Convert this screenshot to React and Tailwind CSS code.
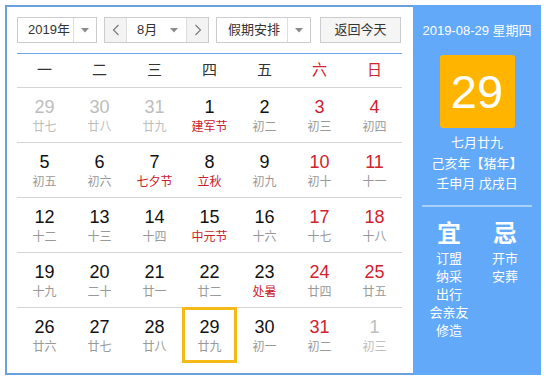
import React from "react";

const F = { fontFamily: '"Liberation Sans", "Noto Sans CJK SC", sans-serif' };

const rows = [
  [["29","廿七","o"],["30","廿八","o"],["31","廿九","o"],["1","建军节","f"],["2","初二",""],["3","初三","w"],["4","初四","w"]],
  [["5","初五",""],["6","初六",""],["7","七夕节","f"],["8","立秋","f"],["9","初九",""],["10","初十","w"],["11","十一","w"]],
  [["12","十二",""],["13","十三",""],["14","十四",""],["15","中元节","f"],["16","十六",""],["17","十七","w"],["18","十八","w"]],
  [["19","十九",""],["20","二十",""],["21","廿一",""],["22","廿二",""],["23","处暑","f"],["24","廿四","w"],["25","廿五","w"]],
  [["26","廿六",""],["27","廿七",""],["28","廿八",""],["29","廿九","t"],["30","初一",""],["31","初二","w"],["1","初三","o"]],
];

const Tri = () => (
  <svg width="8" height="5" viewBox="0 0 8 5"><path d="M0 0 L8 0 L4 4.5 Z" fill="#8a8a8a" /></svg>
);

const Chev = ({ dir }) => (
  <svg width="8" height="12" viewBox="0 0 8 12">
    <path d={dir === "l" ? "M6.5 1 L1.5 6 L6.5 11" : "M1.5 1 L6.5 6 L1.5 11"} fill="none" stroke="#777" strokeWidth="1.1" />
  </svg>
);

function Cell({ d }) {
  const [n, l, k] = d;
  const today = k === "t";
  let numC = "text-[#111]";
  let lunC = "text-[#999]";
  if (k === "o") { numC = "text-[#bdbdbd]"; lunC = "text-[#bdbdbd]"; }
  if (k === "w") numC = "text-[#d0222f]";
  if (k === "f") lunC = "text-[#c9202c]";
  return (
    <div className={`flex flex-col items-center ${today ? "border-[3px] border-[#f6b917] -mt-px pt-[6px]" : "pt-[8px]"}`}>
      <div className={`text-[18px] leading-[22px] ${numC}`}>{n}</div>
      <div className={`text-[12px] leading-[18px] ${lunC}`}>{l}</div>
    </div>
  );
}

export default function App() {
  const weekdays = ["一","二","三","四","五","六","日"];
  return (
    <div className="w-[547px] h-[381px] bg-white pt-[5px] pl-[5px]" style={F}>
      <div className="flex h-[370px]">
        <div className="w-[408px] border-2 border-r-0 border-[#6c9fe0] pl-[10px] pt-[10px]">
          <div className="flex h-[26px] text-[13px] text-[#333]">
            <div className="flex w-[80px] border border-[#ccc]">
              <div className="w-[55px] pl-[10px] leading-[24px]">2019年</div>
              <div className="flex-1 border-l border-[#ddd] flex items-center justify-center"><Tri /></div>
            </div>
            <div className="flex w-[105px] ml-[7px] border border-[#ccc]">
              <div className="w-[22px] bg-[#f3f3f3] border-r border-[#ddd] flex items-center justify-center"><Chev dir="l" /></div>
              <div className="flex-1 flex items-center pl-[10px] pr-[8px] justify-between">
                <span className="leading-[24px]">8月</span><Tri />
              </div>
              <div className="w-[22px] bg-[#f3f3f3] border-l border-[#ddd] flex items-center justify-center"><Chev dir="r" /></div>
            </div>
            <div className="flex w-[95px] ml-[7px] border border-[#ccc]">
              <div className="w-[70px] pl-[11px] leading-[24px]">假期安排</div>
              <div className="flex-1 border-l border-[#ddd] flex items-center justify-center"><Tri /></div>
            </div>
            <div className="w-[81px] ml-[9px] border border-[#ccc] bg-[#f5f5f5] flex items-center justify-center leading-[24px]">返回今天</div>
          </div>
          <div className="w-[385px] mt-[10px] h-px bg-[#6aa8ee]" />
          <div className="w-[385px] grid grid-cols-7 h-[34px] border-b border-[#d5d5d5] items-center text-[15px]">
            {weekdays.map((w, i) => (
              <div key={i} className={`text-center ${i >= 5 ? "text-[#d0222f]" : "text-[#333]"}`}>{w}</div>
            ))}
          </div>
          {rows.map((r, i) => (
            <div key={i} className={`w-[385px] grid grid-cols-7 h-[55px] ${i < 4 ? "border-b border-[#d5d5d5]" : ""}`}>
              {r.map((d, j) => <Cell key={j} d={d} />)}
            </div>
          ))}
        </div>
        <div className="w-[128px] bg-[#62a9f9] flex flex-col items-center text-white">
          <div className="mt-[17px] text-[13px] leading-[18px]">2019-08-29 星期四</div>
          <div className="mt-[15px] w-[75px] h-[73px] bg-[#ffb500] rounded-[3px] flex items-center justify-center text-[47px] leading-none">29</div>
          <div className="mt-[5px] text-[13px] leading-[20.5px] text-center">
            <div>七月廿九</div>
            <div>己亥年【猪年】</div>
            <div>壬申月 戊戌日</div>
          </div>
          <div className="mt-[10px] w-[110px] h-[2px] bg-[#a9d0fb]" />
          <div className="flex w-[112px] mt-[12px]">
            <div className="w-[56px] flex flex-col items-center">
              <div className="text-[24px] leading-[30px] font-bold">宜</div>
              <div className="text-[13px] leading-[18px] text-center mt-px">
                <div>订盟</div><div>纳采</div><div>出行</div><div>会亲友</div><div>修造</div>
              </div>
            </div>
            <div className="w-[56px] flex flex-col items-center">
              <div className="text-[24px] leading-[30px] font-bold">忌</div>
              <div className="text-[13px] leading-[18px] text-center mt-px">
                <div>开市</div><div>安葬</div>
              </div>
            </div>
          </div>
        </div>
      </div>
    </div>
  );
}
